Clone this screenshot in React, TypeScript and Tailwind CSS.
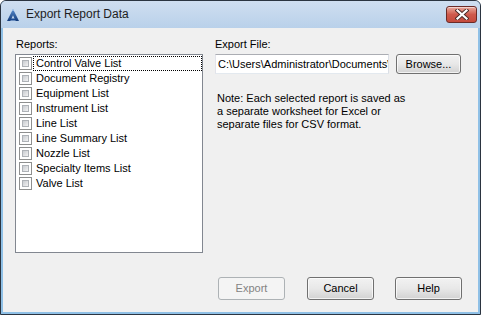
import React from "react";

const reports = [
  "Control Valve List",
  "Document Registry",
  "Equipment List",
  "Instrument List",
  "Line List",
  "Line Summary List",
  "Nozzle List",
  "Specialty Items List",
  "Valve List",
];

function AppIcon() {
  return (
    <svg width="14" height="14" viewBox="0 0 14 14">
      <defs>
        <linearGradient id="ag" x1="0" y1="0" x2="0" y2="1">
          <stop offset="0" stopColor="#5a8fd0" />
          <stop offset="1" stopColor="#123a7a" />
        </linearGradient>
      </defs>
      <path d="M7 1 L13 13 L9.6 13 L7 7.2 L4.4 13 L1 13 Z" fill="url(#ag)" />
      <path d="M5.2 10.6 L8.8 10.6 L9.6 12.4 L4.4 12.4 Z" fill="#1a4a94" />
      <path d="M7 1 L8 3 L6 3 Z" fill="#9cc2ee" />
    </svg>
  );
}

function CloseButton() {
  return (
    <div className="absolute left-[445px] top-[5px] w-[31px] h-[17px] rounded-[3px] border border-[#6b2b27] bg-gradient-to-b from-[#e8a99d] via-[#cf5a4c] to-[#c44a3c] flex items-center justify-center shadow-[inset_0_1px_0_rgba(255,255,255,0.5)]">
      <svg width="14" height="11" viewBox="0 0 14 11">
        <path d="M2.5 1.5 L11.5 9.5 M11.5 1.5 L2.5 9.5" stroke="#4a2b28" strokeWidth="4" strokeLinecap="square" />
        <path d="M2.5 1.5 L11.5 9.5 M11.5 1.5 L2.5 9.5" stroke="#ffffff" strokeWidth="2.2" strokeLinecap="square" />
      </svg>
    </div>
  );
}

function Checkbox() {
  return (
    <div className="w-[13px] h-[13px] border border-[#8e8f8f] bg-white p-[2px] shrink-0">
      <div className="w-full h-full border border-[#aeb2b7] bg-gradient-to-br from-[#c9ccd1] to-[#f2f2f2]" />
    </div>
  );
}

function Button({ label, disabled }: { label: string; disabled?: boolean }) {
  return (
    <div
      className={
        disabled
          ? "w-[67px] h-[23px] rounded-[3px] border border-[#adb2b5] bg-[#f4f4f4] text-[#838383] flex items-center justify-center"
          : "w-[67px] h-[23px] rounded-[3px] border border-[#707070] bg-gradient-to-b from-[#f2f2f2] via-[#e8e8e8] to-[#d2d2d2] shadow-[inset_0_0_0_1px_rgba(255,255,255,0.7)] text-black flex items-center justify-center"
      }
    >
      {label}
    </div>
  );
}

export default function App() {
  return (
    <div
      className="relative w-[481px] h-[315px] flex flex-col border border-[#2b3440] rounded-t-[6px] bg-[#8fc0e6] overflow-hidden text-[11px] leading-[13px] text-black"
      style={{ fontFamily: '"Liberation Sans", Arial, sans-serif' }}
    >
      {/* title bar */}
      <div className="h-[27px] shrink-0 flex items-center bg-gradient-to-b from-[#cfdef0] to-[#b9d1ea] pl-[5px]">
        <AppIcon />
        <span className="ml-[6px] text-[12px] text-[#1e1e1e]">Export Report Data</span>
        <CloseButton />
      </div>

      {/* client */}
      <div className="flex-1 mx-[2px] mb-[2px] bg-[#f0f0f0] flex flex-col pl-[12px] pr-[16px] pt-[10px] pb-[12px]">
        <div className="flex gap-[12px]">
          <div className="w-[188px] flex flex-col">
            <span className="pl-px">Reports:</span>
            <div className="mt-[3px] h-[199px] border border-[#828790] bg-white pt-px">
              {reports.map((r, i) => (
                <div key={r} className="h-[15px] flex items-center pl-[3px]">
                  <Checkbox />
                  <span
                    className={
                      i === 0
                        ? "ml-[1px] flex-1 h-[15px] flex items-center pl-[2px] border border-dotted border-black"
                        : "ml-[1px] flex-1 h-[15px] flex items-center pl-[3px]"
                    }
                  >
                    {r}
                  </span>
                </div>
              ))}
            </div>
          </div>

          <div className="w-[246px] flex flex-col">
            <span>Export File:</span>
            <div className="mt-[3px] flex items-center">
              <div className="w-[174px] h-[20px] border border-[#abadb3] border-l-[#e2e3ea] border-b-[#e3e9ef] border-r-[#dbdfe6] bg-white pl-[2px] overflow-hidden whitespace-nowrap flex items-center">
                C:\Users\Administrator\Documents\
              </div>
              <div className="ml-[7px] w-[65px] h-[20px] rounded-[3px] border border-[#707070] bg-gradient-to-b from-[#f2f2f2] via-[#e8e8e8] to-[#d2d2d2] shadow-[inset_0_0_0_1px_rgba(255,255,255,0.7)] flex items-center justify-center">
                Browse...
              </div>
            </div>
            <p className="mt-[18px] pl-[2px] leading-[13px]">
              Note: Each selected report is saved as
              <br />
              a separate worksheet for Excel or
              <br />
              separate files for CSV format.
            </p>
          </div>
        </div>

        <div className="mt-auto flex justify-end">
          <Button label="Export" disabled />
          <div className="ml-[22px]">
            <Button label="Cancel" />
          </div>
          <div className="ml-[21px]">
            <Button label="Help" />
          </div>
        </div>
      </div>
    </div>
  );
}
